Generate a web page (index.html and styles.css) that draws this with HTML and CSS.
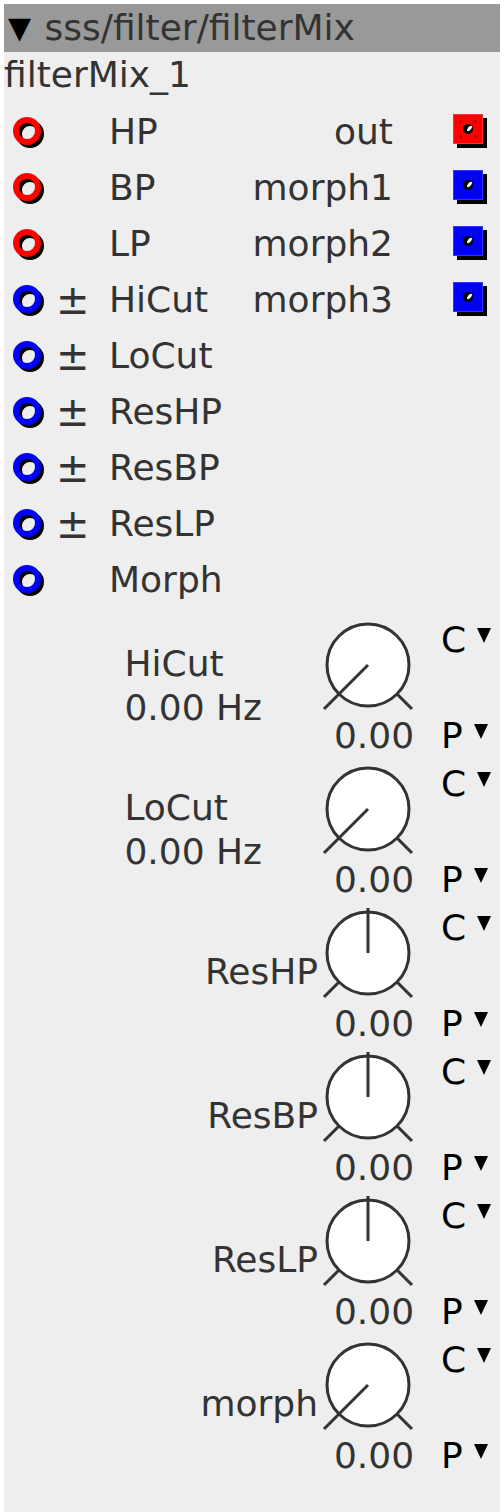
FILE: index.html
```html
<!DOCTYPE html>
<html lang="en">
<head>
    <meta charset="UTF-8">
    <title>filterMix</title>
    <link rel="stylesheet" href="styles.css">
</head>
<body>

<div class="module">
    <div class="module-header"><span class="collapse">▼</span> sss/filter/filterMix</div>
    <div class="instance-name">filterMix_1</div>

    <div class="io-list">
        <div class="io-row">
            <div class="inlet"><svg width="36" height="36"><circle cx="19" cy="20" r="11" class="ring-shadow"/><circle cx="16" cy="17" r="11" class="ring-red"/></svg></div>
            <div class="bipolar"></div>
            <div class="io-label">HP</div>
            <div class="out-label">out</div>
            <div class="outlet"><svg width="36" height="36"><rect x="4" y="4" width="30" height="30" fill="#000"/><rect x="0.5" y="0.5" width="29" height="29" fill="#f00" stroke="#f33"/><path d="M7 9V7H9M21 7H23V9M23 21V23H21M9 23H7V21" class="jack-corner"/><circle cx="15" cy="15" r="5" fill="#000"/><ellipse cx="16.5" cy="14.5" rx="1.6" ry="3.2" transform="rotate(40 16.5 14.5)" fill="#fff"/></svg></div>
        </div>
        <div class="io-row">
            <div class="inlet"><svg width="36" height="36"><circle cx="19" cy="20" r="11" class="ring-shadow"/><circle cx="16" cy="17" r="11" class="ring-red"/></svg></div>
            <div class="bipolar"></div>
            <div class="io-label">BP</div>
            <div class="out-label">morph1</div>
            <div class="outlet"><svg width="36" height="36"><rect x="4" y="4" width="30" height="30" fill="#000"/><rect x="0.5" y="0.5" width="29" height="29" fill="#00f" stroke="#33f"/><path d="M7 9V7H9M21 7H23V9M23 21V23H21M9 23H7V21" class="jack-corner"/><circle cx="15" cy="15" r="5" fill="#000"/><ellipse cx="16.5" cy="14.5" rx="1.6" ry="3.2" transform="rotate(40 16.5 14.5)" fill="#fff"/></svg></div>
        </div>
        <div class="io-row">
            <div class="inlet"><svg width="36" height="36"><circle cx="19" cy="20" r="11" class="ring-shadow"/><circle cx="16" cy="17" r="11" class="ring-red"/></svg></div>
            <div class="bipolar"></div>
            <div class="io-label">LP</div>
            <div class="out-label">morph2</div>
            <div class="outlet"><svg width="36" height="36"><rect x="4" y="4" width="30" height="30" fill="#000"/><rect x="0.5" y="0.5" width="29" height="29" fill="#00f" stroke="#33f"/><path d="M7 9V7H9M21 7H23V9M23 21V23H21M9 23H7V21" class="jack-corner"/><circle cx="15" cy="15" r="5" fill="#000"/><ellipse cx="16.5" cy="14.5" rx="1.6" ry="3.2" transform="rotate(40 16.5 14.5)" fill="#fff"/></svg></div>
        </div>
        <div class="io-row">
            <div class="inlet"><svg width="36" height="36"><circle cx="19" cy="20" r="11" class="ring-shadow"/><circle cx="16" cy="17" r="11" class="ring-blue"/></svg></div>
            <div class="bipolar">±</div>
            <div class="io-label">HiCut</div>
            <div class="out-label">morph3</div>
            <div class="outlet"><svg width="36" height="36"><rect x="4" y="4" width="30" height="30" fill="#000"/><rect x="0.5" y="0.5" width="29" height="29" fill="#00f" stroke="#33f"/><path d="M7 9V7H9M21 7H23V9M23 21V23H21M9 23H7V21" class="jack-corner"/><circle cx="15" cy="15" r="5" fill="#000"/><ellipse cx="16.5" cy="14.5" rx="1.6" ry="3.2" transform="rotate(40 16.5 14.5)" fill="#fff"/></svg></div>
        </div>
        <div class="io-row">
            <div class="inlet"><svg width="36" height="36"><circle cx="19" cy="20" r="11" class="ring-shadow"/><circle cx="16" cy="17" r="11" class="ring-blue"/></svg></div>
            <div class="bipolar">±</div>
            <div class="io-label">LoCut</div>
        </div>
        <div class="io-row">
            <div class="inlet"><svg width="36" height="36"><circle cx="19" cy="20" r="11" class="ring-shadow"/><circle cx="16" cy="17" r="11" class="ring-blue"/></svg></div>
            <div class="bipolar">±</div>
            <div class="io-label">ResHP</div>
        </div>
        <div class="io-row">
            <div class="inlet"><svg width="36" height="36"><circle cx="19" cy="20" r="11" class="ring-shadow"/><circle cx="16" cy="17" r="11" class="ring-blue"/></svg></div>
            <div class="bipolar">±</div>
            <div class="io-label">ResBP</div>
        </div>
        <div class="io-row">
            <div class="inlet"><svg width="36" height="36"><circle cx="19" cy="20" r="11" class="ring-shadow"/><circle cx="16" cy="17" r="11" class="ring-blue"/></svg></div>
            <div class="bipolar">±</div>
            <div class="io-label">ResLP</div>
        </div>
        <div class="io-row">
            <div class="inlet"><svg width="36" height="36"><circle cx="19" cy="20" r="11" class="ring-shadow"/><circle cx="16" cy="17" r="11" class="ring-blue"/></svg></div>
            <div class="bipolar"></div>
            <div class="io-label">Morph</div>
        </div>
    </div>

    <div class="knobs">
        <div class="knob-row">
            <div class="knob-label with-unit"><span>HiCut<br>0.00 Hz</span></div>
            <div class="knob">
                <svg width="96" height="96" viewBox="-48 -48 96 96"><circle r="41" class="dial"/><path d="M-29 29L-44 44M29 29L44 44M0 0L-31 31" class="dial-line"/></svg>
                <div class="knob-value">0.00</div>
            </div>
            <div class="knob-mode"><div>C<i class="arrow"></i></div><div>P<i class="arrow"></i></div></div>
        </div>
        <div class="knob-row">
            <div class="knob-label with-unit"><span>LoCut<br>0.00 Hz</span></div>
            <div class="knob">
                <svg width="96" height="96" viewBox="-48 -48 96 96"><circle r="41" class="dial"/><path d="M-29 29L-44 44M29 29L44 44M0 0L-31 31" class="dial-line"/></svg>
                <div class="knob-value">0.00</div>
            </div>
            <div class="knob-mode"><div>C<i class="arrow"></i></div><div>P<i class="arrow"></i></div></div>
        </div>
        <div class="knob-row">
            <div class="knob-label">ResHP</div>
            <div class="knob">
                <svg width="96" height="96" viewBox="-48 -48 96 96"><circle r="41" class="dial"/><path d="M-29 29L-44 44M29 29L44 44M0 0L0 -45" class="dial-line"/></svg>
                <div class="knob-value">0.00</div>
            </div>
            <div class="knob-mode"><div>C<i class="arrow"></i></div><div>P<i class="arrow"></i></div></div>
        </div>
        <div class="knob-row">
            <div class="knob-label">ResBP</div>
            <div class="knob">
                <svg width="96" height="96" viewBox="-48 -48 96 96"><circle r="41" class="dial"/><path d="M-29 29L-44 44M29 29L44 44M0 0L0 -45" class="dial-line"/></svg>
                <div class="knob-value">0.00</div>
            </div>
            <div class="knob-mode"><div>C<i class="arrow"></i></div><div>P<i class="arrow"></i></div></div>
        </div>
        <div class="knob-row">
            <div class="knob-label">ResLP</div>
            <div class="knob">
                <svg width="96" height="96" viewBox="-48 -48 96 96"><circle r="41" class="dial"/><path d="M-29 29L-44 44M29 29L44 44M0 0L0 -45" class="dial-line"/></svg>
                <div class="knob-value">0.00</div>
            </div>
            <div class="knob-mode"><div>C<i class="arrow"></i></div><div>P<i class="arrow"></i></div></div>
        </div>
        <div class="knob-row">
            <div class="knob-label">morph</div>
            <div class="knob">
                <svg width="96" height="96" viewBox="-48 -48 96 96"><circle r="41" class="dial"/><path d="M-29 29L-44 44M29 29L44 44M0 0L-31 31" class="dial-line"/></svg>
                <div class="knob-value">0.00</div>
            </div>
            <div class="knob-mode"><div>C<i class="arrow"></i></div><div>P<i class="arrow"></i></div></div>
        </div>
    </div>
</div>

</body>
</html>
```

FILE: styles.css
```css
body, html {
    margin: 0;
    padding: 0;
    background: #fff;
    font-family: 'DejaVu Sans', sans-serif;
}

.module {
    margin: 4px 4px 0 4px;
    width: 496px;
    min-height: 1508px;
    background: #eee;
    color: #333;
    font-size: 36px;
}

.module-header {
    height: 48px;
    line-height: 48px;
    background: #999;
    padding-left: 4px;
    white-space: nowrap;
}

.collapse {
    color: #000;
    font-size: 30px;
    vertical-align: top;
    margin-right: 2px;
}

.instance-name {
    height: 46px;
    line-height: 46px;
    margin-bottom: 6px;
}

.io-row {
    display: grid;
    grid-template-columns: 52px 53px 141px 143px 1fr;
    height: 56px;
    line-height: 56px;
    align-items: center;
}

.inlet svg {
    display: block;
    margin-left: 7px;
}

.ring-shadow {
    fill: none;
    stroke: #000;
    stroke-width: 6;
}

.ring-red {
    fill: none;
    stroke: #f00;
    stroke-width: 6;
}

.ring-blue {
    fill: none;
    stroke: #00f;
    stroke-width: 6;
}

.bipolar {
    font-size: 40px;
}

.out-label {
    text-align: right;
}

.outlet svg {
    display: block;
    margin-left: 60px;
}

.jack-corner {
    fill: none;
    stroke: #222;
    stroke-width: 1;
    stroke-dasharray: 2 1;
}

.knob-row {
    display: flex;
    height: 144px;
    align-items: center;
}

.knob-label {
    flex-grow: 1;
    text-align: right;
    line-height: 44px;
    margin-right: 2px;
    padding-top: 8px;
}

.knob-label.with-unit {
    margin-right: 58px;
    padding-top: 12px;
}

.knob-label span {
    display: inline-block;
    text-align: left;
}

.knob {
    width: 96px;
    align-self: flex-start;
    padding-top: 9px;
}

.knob svg {
    display: block;
}

.dial {
    fill: #fff;
    stroke: #333;
    stroke-width: 3;
}

.dial-line {
    fill: none;
    stroke: #333;
    stroke-width: 3;
}

.knob-value {
    line-height: 40px;
    margin-top: 3px;
    margin-left: 12px;
    text-align: center;
}

.knob-mode {
    align-self: flex-start;
    width: 59px;
    margin-left: 25px;
    padding-top: 12px;
    color: #000;
    line-height: 40px;
    display: flex;
    flex-direction: column;
    gap: 56px;
}

.arrow {
    display: inline-block;
    margin-left: 11px;
    vertical-align: top;
    margin-top: 8px;
    border-left: 7.5px solid transparent;
    border-right: 7.5px solid transparent;
    border-top: 15px solid #000;
}
```
